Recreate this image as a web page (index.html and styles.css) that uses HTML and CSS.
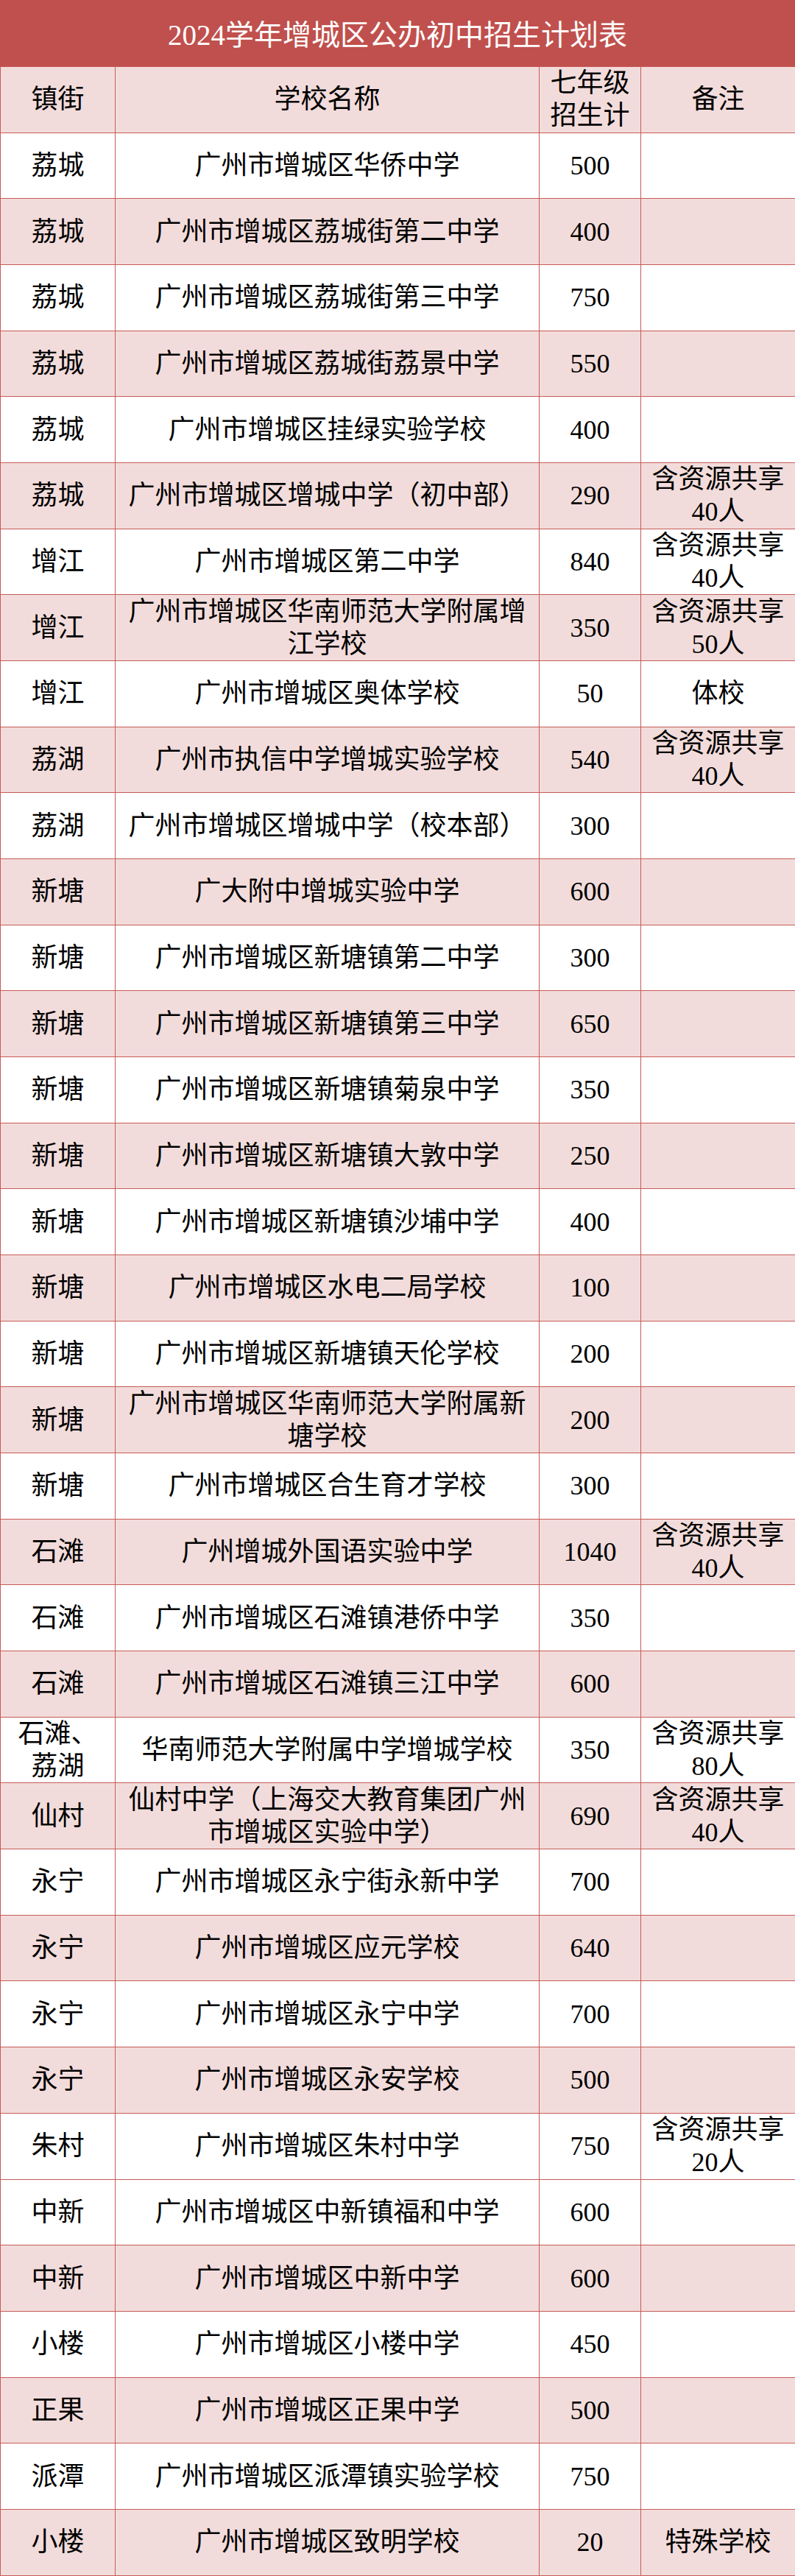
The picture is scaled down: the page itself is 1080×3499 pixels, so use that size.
FILE: index.html
```html
<!DOCTYPE html>
<html lang="zh-CN">
<head>
<meta charset="utf-8">
<title>2024学年增城区公办初中招生计划表</title>
<link rel="stylesheet" href="styles.css">
</head>
<body>
<div class="sheet">
  <div class="title">2024学年增城区公办初中招生计划表</div>
  <table class="plan">
    <colgroup>
      <col class="c-town">
      <col class="c-school">
      <col class="c-num">
      <col class="c-note">
    </colgroup>
    <thead>
      <tr class="pink">
        <th>镇街</th>
        <th>学校名称</th>
        <th>七年级招生计</th>
        <th>备注</th>
      </tr>
    </thead>
    <tbody>
      <tr><td>荔城</td><td>广州市增城区华侨中学</td><td>500</td><td></td></tr>
      <tr class="pink"><td>荔城</td><td>广州市增城区荔城街第二中学</td><td>400</td><td></td></tr>
      <tr><td>荔城</td><td>广州市增城区荔城街第三中学</td><td>750</td><td></td></tr>
      <tr class="pink"><td>荔城</td><td>广州市增城区荔城街荔景中学</td><td>550</td><td></td></tr>
      <tr><td>荔城</td><td>广州市增城区挂绿实验学校</td><td>400</td><td></td></tr>
      <tr class="pink"><td>荔城</td><td>广州市增城区增城中学（初中部）</td><td>290</td><td>含资源共享40人</td></tr>
      <tr><td>增江</td><td>广州市增城区第二中学</td><td>840</td><td>含资源共享40人</td></tr>
      <tr class="pink"><td>增江</td><td>广州市增城区华南师范大学附属增江学校</td><td>350</td><td>含资源共享50人</td></tr>
      <tr><td>增江</td><td>广州市增城区奥体学校</td><td>50</td><td>体校</td></tr>
      <tr class="pink"><td>荔湖</td><td>广州市执信中学增城实验学校</td><td>540</td><td>含资源共享40人</td></tr>
      <tr><td>荔湖</td><td>广州市增城区增城中学（校本部）</td><td>300</td><td></td></tr>
      <tr class="pink"><td>新塘</td><td>广大附中增城实验中学</td><td>600</td><td></td></tr>
      <tr><td>新塘</td><td>广州市增城区新塘镇第二中学</td><td>300</td><td></td></tr>
      <tr class="pink"><td>新塘</td><td>广州市增城区新塘镇第三中学</td><td>650</td><td></td></tr>
      <tr><td>新塘</td><td>广州市增城区新塘镇菊泉中学</td><td>350</td><td></td></tr>
      <tr class="pink"><td>新塘</td><td>广州市增城区新塘镇大敦中学</td><td>250</td><td></td></tr>
      <tr><td>新塘</td><td>广州市增城区新塘镇沙埔中学</td><td>400</td><td></td></tr>
      <tr class="pink"><td>新塘</td><td>广州市增城区水电二局学校</td><td>100</td><td></td></tr>
      <tr><td>新塘</td><td>广州市增城区新塘镇天伦学校</td><td>200</td><td></td></tr>
      <tr class="pink"><td>新塘</td><td>广州市增城区华南师范大学附属新塘学校</td><td>200</td><td></td></tr>
      <tr><td>新塘</td><td>广州市增城区合生育才学校</td><td>300</td><td></td></tr>
      <tr class="pink"><td>石滩</td><td>广州增城外国语实验中学</td><td>1040</td><td>含资源共享40人</td></tr>
      <tr><td>石滩</td><td>广州市增城区石滩镇港侨中学</td><td>350</td><td></td></tr>
      <tr class="pink"><td>石滩</td><td>广州市增城区石滩镇三江中学</td><td>600</td><td></td></tr>
      <tr><td>石滩、荔湖</td><td>华南师范大学附属中学增城学校</td><td>350</td><td>含资源共享80人</td></tr>
      <tr class="pink"><td>仙村</td><td>仙村中学（上海交大教育集团广州市增城区实验中学）</td><td>690</td><td>含资源共享40人</td></tr>
      <tr><td>永宁</td><td>广州市增城区永宁街永新中学</td><td>700</td><td></td></tr>
      <tr class="pink"><td>永宁</td><td>广州市增城区应元学校</td><td>640</td><td></td></tr>
      <tr><td>永宁</td><td>广州市增城区永宁中学</td><td>700</td><td></td></tr>
      <tr class="pink"><td>永宁</td><td>广州市增城区永安学校</td><td>500</td><td></td></tr>
      <tr><td>朱村</td><td>广州市增城区朱村中学</td><td>750</td><td>含资源共享20人</td></tr>
      <tr><td>中新</td><td>广州市增城区中新镇福和中学</td><td>600</td><td></td></tr>
      <tr class="pink"><td>中新</td><td>广州市增城区中新中学</td><td>600</td><td></td></tr>
      <tr><td>小楼</td><td>广州市增城区小楼中学</td><td>450</td><td></td></tr>
      <tr class="pink"><td>正果</td><td>广州市增城区正果中学</td><td>500</td><td></td></tr>
      <tr><td>派潭</td><td>广州市增城区派潭镇实验学校</td><td>750</td><td></td></tr>
      <tr class="pink"><td>小楼</td><td>广州市增城区致明学校</td><td>20</td><td>特殊学校</td></tr>
    </tbody>
  </table>
</div>
</body>
</html>
```

FILE: styles.css
```css
html, body {
  margin: 0;
  padding: 0;
  background: #ffffff;
}

.sheet {
  width: 1080px;
  font-family: "Liberation Serif", "Noto Sans CJK SC", serif;
  color: #000000;
}

.title {
  height: 90px;
  background: #c0504d;
  color: #ffffff;
  font-size: 39px;
  line-height: 96px;
  text-align: center;
}

.plan {
  width: 1080px;
  border-collapse: collapse;
  table-layout: fixed;
  font-size: 36px;
}

.c-town { width: 156px; }
.c-school { width: 576px; }
.c-num { width: 138px; }
.c-note { width: 210px; }

.plan th,
.plan td {
  border: 1px solid #c65b58;
  padding: 0 10px;
  height: 88.68px;
  line-height: 44px;
  text-align: center;
  vertical-align: middle;
  font-weight: normal;
  overflow: visible;
}

.plan tr {
  height: 89.68px;
  background: #ffffff;
}

.plan tr.pink {
  background: #f2dcdb;
}
```
